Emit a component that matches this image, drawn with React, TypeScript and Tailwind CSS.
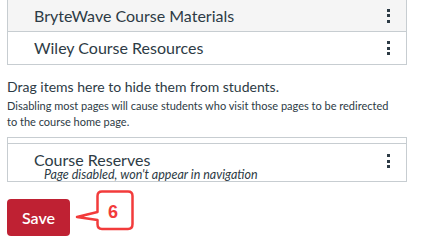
export default function App() {
  const Kebab = () => (
    <span className="flex flex-col items-center gap-[2.5px] mr-[16px]">
      <span className="w-[3px] h-[3px] bg-[#2d3b45]" />
      <span className="w-[3px] h-[3px] bg-[#2d3b45]" />
      <span className="w-[3px] h-[3px] bg-[#2d3b45]" />
    </span>
  );

  return (
    <div className="relative w-[423px] h-[244px] bg-white overflow-hidden font-['Lato','Liberation_Sans',sans-serif] text-[#2d3b45]">
      {/* Enabled items */}
      <div className="ml-[7px] w-[400px] border-x border-b border-[#c7cdd1]">
        <div className="h-[32px] flex items-center justify-between bg-[#f5f5f5] border-b border-[#c7cdd1] pl-[26px]">
          <span className="text-[16px]">BryteWave Course Materials</span>
          <Kebab />
        </div>
        <div className="h-[32px] flex items-center justify-between pl-[26px]">
          <span className="text-[16px]">Wiley Course Resources</span>
          <Kebab />
        </div>
      </div>

      {/* Hidden section */}
      <div className="ml-[7px] mt-[13px]">
        <p className="text-[14px] leading-[18px]">Drag items here to hide them from students.</p>
        <p className="text-[11px] leading-[16px] mt-[2px] whitespace-nowrap">
          Disabling most pages will cause students who visit those pages to be redirected
          <br />
          to the course home page.
        </p>
      </div>

      <div className="ml-[7px] mt-[7px] w-[400px] border border-[#c7cdd1]">
        <div className="h-[6px] border-b border-[#c7cdd1]" />
        <div className="h-[37px] flex items-start justify-between pl-[26px] pt-[10px]">
          <div className="flex flex-col">
            <span className="text-[16px] leading-[12px]">Course Reserves</span>
            <span className="text-[12.5px] italic leading-[8px] mt-[5px] pl-[10px]">
              Page disabled, won't appear in navigation
            </span>
          </div>
          <div className="mt-[0px]">
            <Kebab />
          </div>
        </div>
      </div>

      <button className="ml-[7px] mt-[17px] w-[63px] h-[37px] rounded-[4px] bg-[#bf2133] text-white text-[16px] font-semibold flex items-center justify-center">
        Save
      </button>

      {/* Callout annotation */}
      <svg className="absolute left-[75px] top-[188px]" width="62" height="44" viewBox="0 0 62 44">
        <path
          d="M27 3.5 H53 Q57.5 3.5 57.5 8 V36 Q57.5 41 53 41 H27 Q22.5 41 22.5 36 V32 L2 29 L22.5 24 V8 Q22.5 3.5 27 3.5 Z"
          fill="white"
          stroke="#f23b3b"
          strokeWidth="2.5"
          strokeLinejoin="round"
        />
      </svg>
      <span className="absolute left-[108px] top-[201px] text-[18px] font-bold text-[#f23b3b] leading-[22px] font-['Liberation_Sans',sans-serif]">
        6
      </span>
    </div>
  );
}
